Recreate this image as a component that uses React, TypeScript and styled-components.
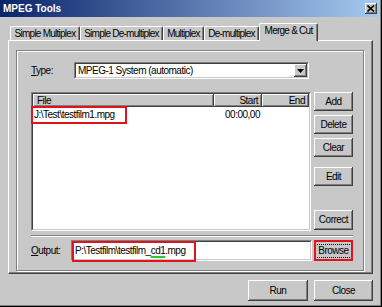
import React from 'react'
import styled, { createGlobalStyle } from 'styled-components'

const GlobalStyle = createGlobalStyle`
  html, body {
    margin: 0;
    padding: 0;
    background: #c8c8c8;
  }
  body {
    font-family: 'Liberation Sans', Arial, sans-serif;
    font-size: 10px;
    line-height: 1;
  }
`

const face = '#c8c8c8'
const shadow = '#808080'
const darkShadow = '#404040'
const annotation = '#e0141c'

const Window = styled.div`
  width: 382px;
  height: 307px;
  box-sizing: border-box;
  background: ${face};
  display: flex;
  flex-direction: column;
  box-shadow: inset -1px -1px 0 #000, inset -2px -2px 0 ${shadow};
  color: #000;
  letter-spacing: -0.5px;
`

const TitleBar = styled.div`
  height: 17px;
  margin-right: 2px;
  padding: 0 3px 0 3px;
  display: flex;
  align-items: center;
  justify-content: space-between;
  background: linear-gradient(to right, #0a246a, #a6caf0);

  .title {
    color: #fff;
    font-weight: bold;
    font-size: 10px;
    letter-spacing: 0;
  }
`

const CaptionButton = styled.div`
  width: 12px;
  height: 11px;
  box-sizing: border-box;
  background: ${face};
  display: flex;
  align-items: center;
  justify-content: center;
  box-shadow: inset -1px -1px 0 ${darkShadow}, inset 1px 1px 0 #fff, inset -2px -2px 0 ${shadow};
`

const Body = styled.div`
  flex: 1;
  display: flex;
  flex-direction: column;
  padding: 6px 9px 0 8px;
`

const TabStrip = styled.div`
  height: 17px;
  padding-left: 2px;
  display: flex;
  align-items: flex-end;
  position: relative;
  z-index: 2;
`

const Tab = styled.div<{ $w: number; $active?: boolean }>`
  box-sizing: border-box;
  width: ${p => p.$w}px;
  height: ${p => (p.$active ? 18 : 14)}px;
  margin-bottom: ${p => (p.$active ? -1 : 0)}px;
  padding-bottom: ${p => (p.$active ? 3 : 0)}px;
  background: ${face};
  border-top: 1px solid #fff;
  border-left: 1px solid #fff;
  border-right: 1px solid ${darkShadow};
  border-radius: 2px 2px 0 0;
  box-shadow: inset -1px 0 0 ${shadow};
  display: flex;
  align-items: center;
  justify-content: center;
  white-space: nowrap;
  letter-spacing: -0.75px;
`

const Panel = styled.div`
  height: 234px;
  box-sizing: border-box;
  display: flex;
  padding: 9px 8px 2px 7px;
  border-top: 1px solid #fff;
  border-left: 1px solid #fff;
  border-right: 1px solid ${darkShadow};
  border-bottom: 1px solid ${darkShadow};
  box-shadow: inset -1px -1px 0 ${shadow};
`

const GroupBox = styled.div`
  flex: 1;
  display: flex;
  flex-direction: column;
  padding: 11px 7px 0 14px;
  border: 1px solid ${shadow};
  box-shadow: inset 1px 1px 0 #fff, 1px 1px 0 #fff;
`

const FieldRow = styled.div<{ $h: number }>`
  display: flex;
  align-items: center;
  height: ${p => p.$h}px;
`

const Label = styled.div<{ $w: number }>`
  width: ${p => p.$w}px;
  flex: none;
`

const Sunken = styled.div<{ $w: number }>`
  position: relative;
  width: ${p => p.$w}px;
  height: 100%;
  box-sizing: border-box;
  border-style: solid;
  border-width: 1px;
  border-color: ${shadow} #fff #fff ${shadow};
`

const SunkenInner = styled.div<{ $bg?: string }>`
  height: 100%;
  box-sizing: border-box;
  border-style: solid;
  border-width: 1px;
  border-color: ${darkShadow} ${face} ${face} ${darkShadow};
  background: ${p => p.$bg || '#fff'};
  display: flex;
  flex-direction: column;
`

const ComboText = styled.div`
  flex: 1;
  display: flex;
  align-items: center;
  justify-content: space-between;
  padding-left: 2px;
`

const ArrowButton = styled.div`
  width: 13px;
  height: 100%;
  box-sizing: border-box;
  background: ${face};
  display: flex;
  align-items: center;
  justify-content: center;
  box-shadow: inset -1px -1px 0 ${darkShadow}, inset 1px 1px 0 #fff, inset -2px -2px 0 ${shadow};
`

const ListArea = styled.div`
  margin-top: 13px;
  height: 139px;
  display: flex;
  gap: 3px;
`

const ListHeader = styled.div`
  height: 13px;
  display: flex;
  background: ${face};
  flex: none;
`

const HeaderCell = styled.div<{ $w?: number; $right?: boolean }>`
  box-sizing: border-box;
  ${p => (p.$w ? `width: ${p.$w}px; flex: none;` : 'flex: 1;')}
  height: 100%;
  display: flex;
  align-items: center;
  justify-content: ${p => (p.$right ? 'flex-end' : 'flex-start')};
  padding: 0 4px;
  box-shadow: inset -1px -1px 0 ${darkShadow}, inset 1px 1px 0 #fff, inset -2px -2px 0 ${shadow};
`

const ListRow = styled.div`
  height: 15px;
  display: flex;
  align-items: center;
`

const Cell = styled.div<{ $w: number; $right?: boolean }>`
  width: ${p => p.$w}px;
  box-sizing: border-box;
  text-align: ${p => (p.$right ? 'right' : 'left')};
  padding: 0 ${p => (p.$right ? 2 : 1)}px;
  white-space: nowrap;
`

const Mark = styled.div<{ $l: number; $t: number; $w: number; $h: number }>`
  position: absolute;
  left: ${p => p.$l}px;
  top: ${p => p.$t}px;
  width: ${p => p.$w}px;
  height: ${p => p.$h}px;
  box-sizing: border-box;
  border: 2px solid ${annotation};
  pointer-events: none;
`

const ButtonColumn = styled.div`
  width: 39px;
  display: flex;
  flex-direction: column;
  padding-bottom: 1px;
`

const Button = styled.div<{ $w: number; $h: number; $gap?: number; $push?: boolean }>`
  position: relative;
  width: ${p => p.$w}px;
  height: ${p => p.$h}px;
  flex: none;
  margin-top: ${p => (p.$push ? 'auto' : `${p.$gap || 0}px`)};
  box-sizing: border-box;
  background: ${face};
  display: flex;
  align-items: center;
  justify-content: center;
  box-shadow: inset -1px -1px 0 ${darkShadow}, inset 1px 1px 0 #fff, inset -2px -2px 0 ${shadow};
`

const FocusText = styled.span`
  outline: 1px dotted #000;
  outline-offset: 1px;
  padding: 0 1px;
`

const Separator = styled.div`
  margin-top: 4px;
  width: 322px;
  height: 0;
  border-top: 1px solid ${shadow};
  border-bottom: 1px solid #fff;
`

const OutputRow = styled(FieldRow)`
  margin-top: 3px;
  gap: 2px;
`

const Highlight = styled.span`
  text-decoration: underline;
  text-decoration-color: #2ec82e;
  text-decoration-thickness: 2px;
  text-underline-offset: 2px;
`

const Footer = styled.div`
  margin-top: 6px;
  display: flex;
  justify-content: flex-end;
  gap: 6px;
`

const DownArrow = () => (
  <svg width="7" height="4" viewBox="0 0 7 4">
    <path d="M0 0h7L3.5 4z" fill="#000" />
  </svg>
)

const CloseGlyph = () => (
  <svg width="8" height="7" viewBox="0 0 8 7">
    <path d="M0.5 0.5L7 6.5M7 0.5L0.5 6.5" stroke="#000" strokeWidth="1.6" />
  </svg>
)

const tabs = [
  { label: 'Simple Multiplex', w: 70 },
  { label: 'Simple De-multiplex', w: 83 },
  { label: 'Multiplex', w: 41 },
  { label: 'De-multiplex', w: 55 },
  { label: 'Merge & Cut', w: 59, active: true }
]

const App = () => {
  return (
    <>
      <GlobalStyle />
      <Window>
        <TitleBar>
          <span className='title'>MPEG Tools</span>
          <CaptionButton>
            <CloseGlyph />
          </CaptionButton>
        </TitleBar>
        <Body>
          <TabStrip>
            {tabs.map(t => (
              <Tab key={t.label} $w={t.w} $active={t.active}>
                {t.label}
              </Tab>
            ))}
          </TabStrip>
          <Panel>
            <GroupBox>
              <FieldRow $h={17}>
                <Label $w={43}>
                  <u>T</u>ype:
                </Label>
                <Sunken $w={235}>
                  <SunkenInner>
                    <ComboText>
                      MPEG-1 System (automatic)
                      <ArrowButton>
                        <DownArrow />
                      </ArrowButton>
                    </ComboText>
                  </SunkenInner>
                </Sunken>
              </FieldRow>

              <ListArea>
                <Sunken $w={280}>
                  <SunkenInner>
                    <ListHeader>
                      <HeaderCell $w={181}>File</HeaderCell>
                      <HeaderCell $w={48} $right>Start</HeaderCell>
                      <HeaderCell $w={47} $right>End</HeaderCell>
                    </ListHeader>
                    <ListRow>
                      <Cell $w={181}>J:\Test\testfilm1.mpg</Cell>
                      <Cell $w={48} $right>00:00,00</Cell>
                    </ListRow>
                  </SunkenInner>
                  <Mark $l={-1} $t={13} $w={96} $h={18} />
                </Sunken>
                <ButtonColumn>
                  <Button $w={39} $h={19}>Add</Button>
                  <Button $w={39} $h={19} $gap={4}>Delete</Button>
                  <Button $w={39} $h={19} $gap={4}>Clear</Button>
                  <Button $w={39} $h={19} $gap={10}>Edit</Button>
                  <Button $w={39} $h={20} $push>Correct</Button>
                </ButtonColumn>
              </ListArea>

              <Separator />

              <OutputRow $h={21}>
                <Label $w={38}>
                  <u>O</u>utput:
                </Label>
                <Sunken $w={241}>
                  <SunkenInner>
                    <ComboText>
                      <span>
                        P:\Testfilm\testfilm_<Highlight>cd1</Highlight>.mpg
                      </span>
                    </ComboText>
                  </SunkenInner>
                  <Mark $l={0} $t={0} $w={124} $h={21} />
                </Sunken>
                <Button $w={39} $h={21}>
                  <FocusText>Browse</FocusText>
                  <Mark $l={0} $t={0} $w={39} $h={21} />
                </Button>
              </OutputRow>
            </GroupBox>
          </Panel>
          <Footer>
            <Button $w={60} $h={21}>Run</Button>
            <Button $w={59} $h={21}>Close</Button>
          </Footer>
        </Body>
      </Window>
    </>
  )
}

export default App
